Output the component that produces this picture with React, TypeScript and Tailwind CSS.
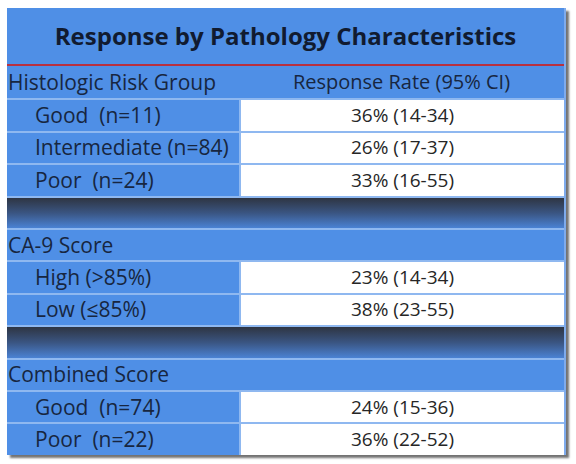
import React from "react";

type Row =
  | { kind: "header"; left: string; right?: string }
  | { kind: "item"; left: string; right: string }
  | { kind: "spacer" };

const rows: Row[] = [
  { kind: "header", left: "Histologic Risk Group", right: "Response Rate (95% CI)" },
  { kind: "item", left: "Good  (n=11)", right: "36% (14-34)" },
  { kind: "item", left: "Intermediate (n=84)", right: "26% (17-37)" },
  { kind: "item", left: "Poor  (n=24)", right: "33% (16-55)" },
  { kind: "spacer" },
  { kind: "header", left: "CA-9 Score" },
  { kind: "item", left: "High (>85%)", right: "23% (14-34)" },
  { kind: "item", left: "Low (\u226485%)", right: "38% (23-55)" },
  { kind: "spacer" },
  { kind: "header", left: "Combined Score" },
  { kind: "item", left: "Good  (n=74)", right: "24% (15-36)" },
  { kind: "item", left: "Poor  (n=22)", right: "36% (22-52)" },
];

export default function App() {
  return (
    <div
      className="w-[576px] h-[464px] bg-white pt-[8px] pl-[7px]"
      style={{ fontFamily: "'Open Sans', sans-serif" }}
    >
      <div className="w-[559px] bg-[#4f8fe6] shadow-[3px_3px_2px_rgba(0,0,0,0.55)] border-r-2 border-[#7fabec]">
        <div className="h-[56px] flex items-center justify-center text-[24px] font-bold text-[#111b30]">
          Response by Pathology Characteristics
        </div>
        <div className="h-[2px] bg-[#b8303f]" />
        {rows.map((r, i) => {
          const border = i === 0 ? "" : "border-t-2 border-[#8fb8f0]";
          if (r.kind === "spacer") {
            return (
              <div
                key={i}
                className={`h-[32.4px] ${border} bg-gradient-to-b from-[#2e3543] via-[#3a5582] to-[#4a82d4]`}
              />
            );
          }
          if (r.kind === "header") {
            return (
              <div key={i} className={`h-[32.4px] ${border} flex items-center`}>
                <div className="w-[232px] pl-[1px] text-[21px] text-[#172640] leading-none whitespace-pre">{r.left}</div>
                <div className="flex-1 text-center text-[20px] text-[#172640] leading-none whitespace-pre">{r.right}</div>
              </div>
            );
          }
          return (
            <div key={i} className={`h-[32.4px] ${border} flex`}>
              <div className="w-[232px] pl-[28px] flex items-center text-[21px] text-[#172640] leading-none whitespace-pre">
                {r.left}
              </div>
              <div className="flex-1 bg-white border-l-2 border-[#8fb8f0] flex items-center justify-center text-[19px] text-[#262626] leading-none whitespace-pre">
                {r.right}
              </div>
            </div>
          );
        })}
      </div>
    </div>
  );
}
